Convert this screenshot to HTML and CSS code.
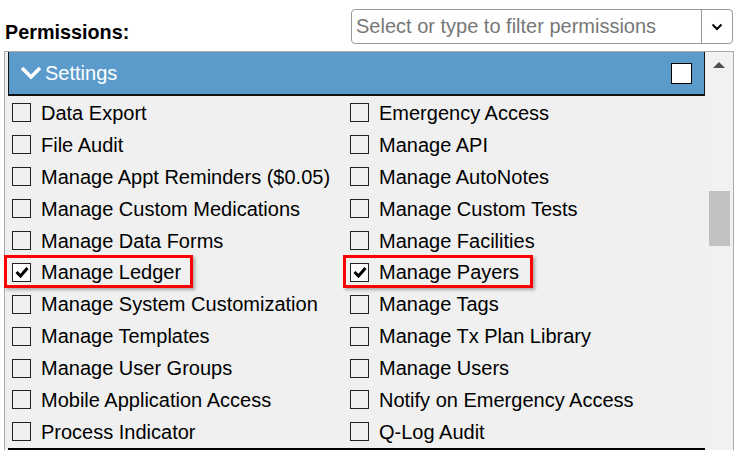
FILE: index.html
```html
<!DOCTYPE html>
<html>
<head>
<meta charset="utf-8">
<link rel="stylesheet" href="styles.css">
</head>
<body>
<div class="top">
  <div class="label">Permissions:</div>
  <div class="filter">
    <div class="filter-input">Select or type to filter permissions</div>
    <div class="filter-btn">
      <svg width="12" height="8" viewBox="0 0 12 8"><polyline points="1.5,1.5 6,6 10.5,1.5" fill="none" stroke="#000" stroke-width="2"/></svg>
    </div>
  </div>
</div>
<div class="panel">
  <div class="list">
    <div class="section-head">
      <svg class="chev" width="22" height="14" viewBox="0 0 22 14"><polyline points="2,2 11,11 20,2" fill="none" stroke="#fff" stroke-width="3.6" stroke-linejoin="miter"/></svg>
      <span class="section-title">Settings</span>
      <span class="head-box"></span>
    </div>
    <div class="grid">
      <div class="item"><span class="hl"><span class="cb"></span><span class="txt">Data Export</span></span></div>
      <div class="item"><span class="hl"><span class="cb"></span><span class="txt">Emergency Access</span></span></div>
      <div class="item"><span class="hl"><span class="cb"></span><span class="txt">File Audit</span></span></div>
      <div class="item"><span class="hl"><span class="cb"></span><span class="txt">Manage API</span></span></div>
      <div class="item"><span class="hl"><span class="cb"></span><span class="txt">Manage Appt Reminders ($0.05)</span></span></div>
      <div class="item"><span class="hl"><span class="cb"></span><span class="txt">Manage AutoNotes</span></span></div>
      <div class="item"><span class="hl"><span class="cb"></span><span class="txt">Manage Custom Medications</span></span></div>
      <div class="item"><span class="hl"><span class="cb"></span><span class="txt">Manage Custom Tests</span></span></div>
      <div class="item"><span class="hl"><span class="cb"></span><span class="txt">Manage Data Forms</span></span></div>
      <div class="item"><span class="hl"><span class="cb"></span><span class="txt">Manage Facilities</span></span></div>
      <div class="item"><span class="hl marked mark-left"><span class="cb checked"><svg width="16" height="16" viewBox="0 0 16 16"><polyline points="2.5,8 6.5,12 13.5,4" fill="none" stroke="#000" stroke-width="3"/></svg></span><span class="txt">Manage Ledger</span></span></div>
      <div class="item"><span class="hl marked mark-right"><span class="cb checked"><svg width="16" height="16" viewBox="0 0 16 16"><polyline points="2.5,8 6.5,12 13.5,4" fill="none" stroke="#000" stroke-width="3"/></svg></span><span class="txt">Manage Payers</span></span></div>
      <div class="item"><span class="hl"><span class="cb"></span><span class="txt">Manage System Customization</span></span></div>
      <div class="item"><span class="hl"><span class="cb"></span><span class="txt">Manage Tags</span></span></div>
      <div class="item"><span class="hl"><span class="cb"></span><span class="txt">Manage Templates</span></span></div>
      <div class="item"><span class="hl"><span class="cb"></span><span class="txt">Manage Tx Plan Library</span></span></div>
      <div class="item"><span class="hl"><span class="cb"></span><span class="txt">Manage User Groups</span></span></div>
      <div class="item"><span class="hl"><span class="cb"></span><span class="txt">Manage Users</span></span></div>
      <div class="item"><span class="hl"><span class="cb"></span><span class="txt">Mobile Application Access</span></span></div>
      <div class="item"><span class="hl"><span class="cb"></span><span class="txt">Notify on Emergency Access</span></span></div>
      <div class="item"><span class="hl"><span class="cb"></span><span class="txt">Process Indicator</span></span></div>
      <div class="item"><span class="hl"><span class="cb"></span><span class="txt">Q-Log Audit</span></span></div>
    </div>
    <div class="next-head"></div>
  </div>
  <div class="scroll">
    <div class="arrow-up"></div>
    <div class="thumb"></div>
  </div>
</div>
</body>
</html>
```
FILE: styles.css
```css
html, body {
  margin: 0;
  padding: 0;
  background: #fff;
  font-family: "Liberation Sans", Arial, sans-serif;
  overflow: hidden;
}
.top {
  height: 51px;
  display: flex;
  justify-content: space-between;
  align-items: flex-start;
}
.label {
  font-weight: bold;
  font-size: 19.8px;
  color: #000;
  margin: 21px 0 0 5px;
}
.filter {
  margin: 9px 7px 0 0;
  width: 382px;
  height: 35px;
  border: 1px solid #999;
  border-radius: 4px;
  display: flex;
  box-sizing: border-box;
  background: #fff;
}
.filter-input {
  flex: 1;
  border-right: 1px solid #999;
  color: #777;
  font-size: 20px;
  padding-left: 4px;
  line-height: 32px;
}
.filter-btn {
  width: 30px;
  display: flex;
  align-items: center;
  justify-content: center;
}
.panel {
  margin-left: 4px;
  width: 730px;
  height: 399px;
  box-sizing: border-box;
  border: 1px solid #aaa;
  border-bottom: none;
  background: #f0f0f0;
  display: flex;
}
.list {
  margin-left: 3px;
  width: 697px;
  display: flex;
  flex-direction: column;
}
.section-head {
  height: 41px;
  background: #5b9bcc;
  border: 1px solid #111;
  border-top: none;
  border-bottom-width: 2px;
  display: flex;
  align-items: center;
  color: #fff;
  font-size: 20px;
  padding-top: 1px;
}
.chev {
  margin-left: 11px;
  margin-right: 3px;
  margin-top: -2px;
}
.section-title {
  flex: 1;
}
.head-box {
  width: 19px;
  height: 19px;
  border: 1px solid #000;
  background: #fff;
  margin-right: 12px;
  margin-top: -1px;
}
.grid {
  display: grid;
  grid-template-columns: 338px 1fr;
  grid-auto-rows: 31.9px;
  padding-top: 1px;
}
.item {
  display: flex;
  align-items: center;
  font-size: 20px;
  color: #000;
}
.hl {
  position: relative;
  display: inline-flex;
  align-items: center;
}
.cb {
  width: 17px;
  height: 17px;
  border: 1px solid #222;
  margin-left: 4px;
  margin-right: 10px;
  display: flex;
  align-items: center;
  justify-content: center;
}
.cb.checked {
  background: #fff;
}
.txt {
  white-space: nowrap;
  line-height: 32px;
}
.marked::after {
  content: "";
  position: absolute;
  top: -1px;
  bottom: 0;
  border: 3px solid #f00;
  box-shadow: 2px 2px 3px rgba(0, 0, 0, 0.3);
}
.mark-left::after {
  left: -4px;
  right: -12px;
}
.mark-right::after {
  left: -3px;
  right: -14px;
}
.next-head {
  height: 2px;
  background: #000;
  margin-top: 0;
}
.scroll {
  flex: 1;
  position: relative;
  background: #f1f1f1;
}
.arrow-up {
  margin: 10px auto 0;
  width: 0;
  height: 0;
  border-left: 6px solid transparent;
  border-right: 6px solid transparent;
  border-bottom: 6px solid #505050;
}
.thumb {
  margin: 123px 0 0 4px;
  width: 21px;
  height: 55px;
  background: #c1c1c1;
}
```
